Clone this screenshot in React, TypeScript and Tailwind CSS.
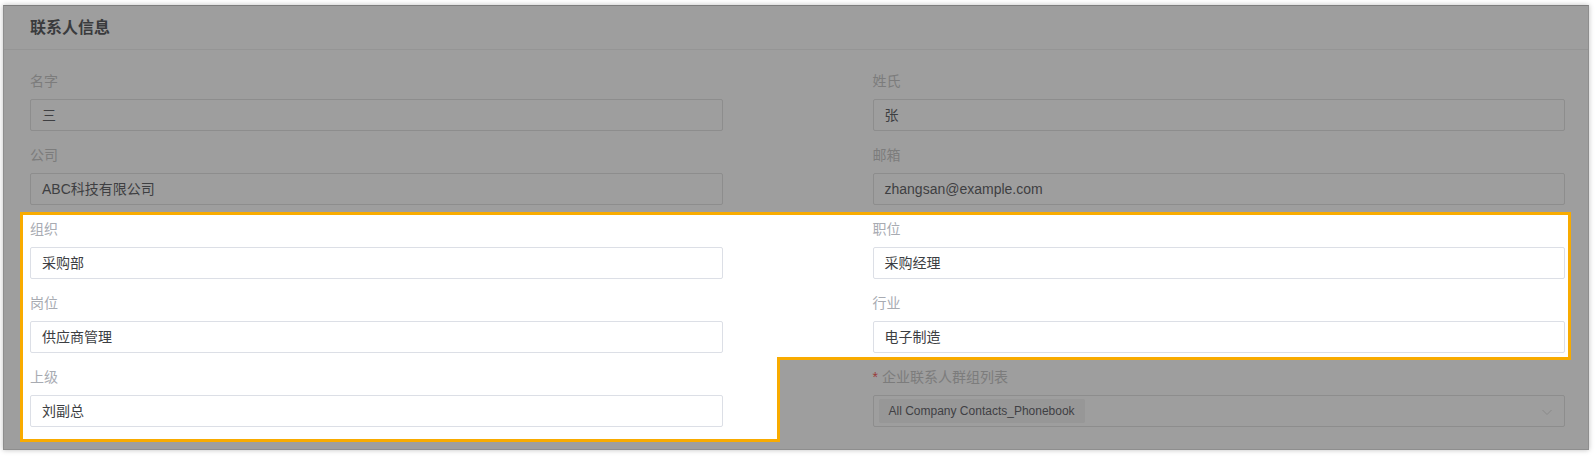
import React from "react";

type Field = {
  label: string;
  value: string;
  hl: boolean;
};

const rows: [Field, Field | null][] = [
  [
    { label: "名字", value: "三", hl: false },
    { label: "姓氏", value: "张", hl: false },
  ],
  [
    { label: "公司", value: "ABC科技有限公司", hl: false },
    { label: "邮箱", value: "zhangsan@example.com", hl: false },
  ],
  [
    { label: "组织", value: "采购部", hl: true },
    { label: "职位", value: "采购经理", hl: true },
  ],
  [
    { label: "岗位", value: "供应商管理", hl: true },
    { label: "行业", value: "电子制造", hl: true },
  ],
  [{ label: "上级", value: "刘副总", hl: true }, null],
];

function TextField({ f }: { f: Field }) {
  return (
    <div className="flex flex-col">
      <div
        className={
          "h-[22px] text-[14px] leading-[22px] mb-[7px] " +
          (f.hl ? "text-[#a8abb2]" : "text-[#7c7c7c]")
        }
      >
        {f.label}
      </div>
      <div
        className={
          "h-[32px] border rounded-[2px] px-[11px] flex items-center text-[14px] " +
          (f.hl
            ? "border-[#dcdfe6] text-[#3c3e42]"
            : "border-[#8d8d8d] text-[#3e3f42]")
        }
      >
        {f.value}
      </div>
    </div>
  );
}

function GroupSelect() {
  return (
    <div className="flex flex-col">
      <div className="h-[22px] text-[14px] leading-[22px] mb-[7px] text-[#7c7c7c] flex items-center">
        <span className="text-[#9a3b3b] mr-[4px]">*</span>
        <span>企业联系人群组列表</span>
      </div>
      <div className="h-[32px] border border-[#8d8d8d] rounded-[2px] pl-[5px] pr-[10px] flex items-center justify-between">
        <div className="h-[24px] bg-[#979797] rounded-[2px] px-[10px] flex items-center text-[12px] text-[#3f4044]">
          All Company Contacts_Phonebook
        </div>
        <svg width="14" height="14" viewBox="0 0 14 14" className="mt-[1px]">
          <path
            d="M2.5 5 L7 9.5 L11.5 5"
            fill="none"
            stroke="#8a8a8a"
            strokeWidth="1"
          />
        </svg>
      </div>
    </div>
  );
}

export default function App() {
  return (
    <div
      className="w-[1595px] h-[456px] bg-white pt-[5px] pl-[3px] overflow-hidden"
      style={{ fontFamily: "'Liberation Sans', 'Noto Sans CJK SC', sans-serif" }}
    >
      <div className="relative w-[1586px] h-[445px] bg-[#9e9e9e] border border-[#8e8e8e] border-t-[#7e7e7e] shadow-[0_0_5px_rgba(0,0,0,0.25)]">
        {/* highlight annotation */}
        <svg
          className="absolute left-[-1px] top-[-1px] z-0"
          width="1586"
          height="445"
          viewBox="0 0 1586 445"
        >
          <path
            d="M18.5 208.5 H1566.5 V353.5 H775.5 V435.5 H18.5 Z"
            fill="#ffffff"
            stroke="#f8ab00"
            strokeWidth="3"
          />
        </svg>

        <div className="relative z-10">
          <div className="h-[44px] border-b border-[#959595] pl-[26px] flex items-center">
            <span className="text-[16px] font-bold text-[#3a3b3d] mt-[1px]">
              联系人信息
            </span>
          </div>
          <div className="pt-[20px] pl-[26px] pr-[23px] grid grid-cols-2 gap-x-[150px] gap-y-[13px]">
            {rows.map(([a, b], i) => (
              <React.Fragment key={i}>
                <TextField f={a} />
                {b ? <TextField f={b} /> : <GroupSelect />}
              </React.Fragment>
            ))}
          </div>
        </div>
      </div>
    </div>
  );
}
